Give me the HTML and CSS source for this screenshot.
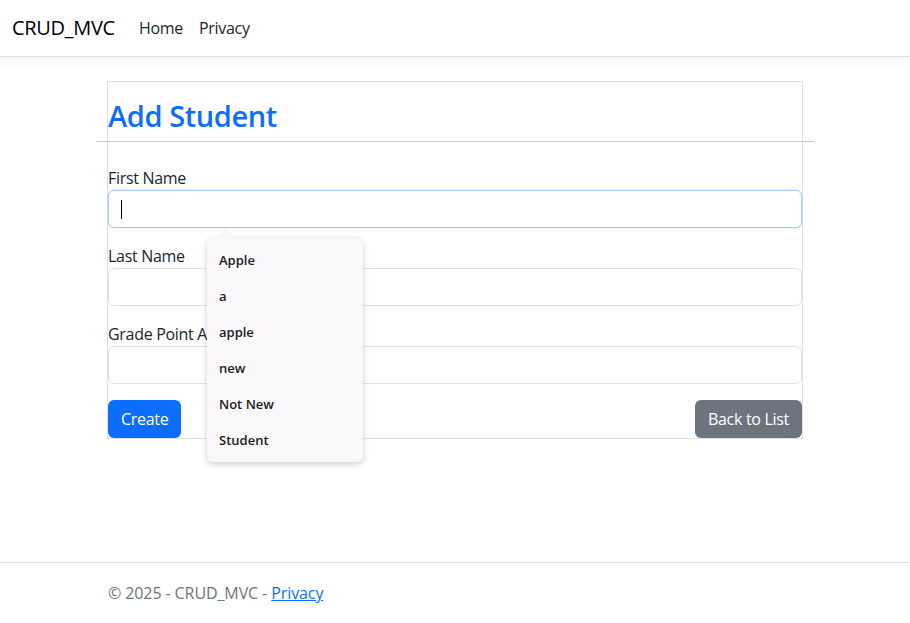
FILE: index.html
```html
<!DOCTYPE html>
<html lang="en">
<head>
    <meta charset="UTF-8">
    <meta name="viewport" content="width=device-width, initial-scale=1.0">
    <title>Add Student - CRUD_MVC</title>
    <link rel="stylesheet" href="styles.css">
</head>
<body>
    <header class="navbar">
        <a class="brand" href="#">CRUD_MVC</a>
        <nav class="nav">
            <a class="nav-link" href="#">Home</a>
            <a class="nav-link" href="#">Privacy</a>
        </nav>
    </header>

    <main class="container">
        <div class="panel">
            <h1 class="title">Add Student</h1>
            <hr class="divider">

            <form class="student-form">
                <div class="field">
                    <label class="label" for="firstName">First Name</label>
                    <div class="input-wrap">
                        <input class="input focused" id="firstName" type="text">
                        <span class="caret"></span>
                        <div class="suggest">
                            <div class="suggest-item">Apple</div>
                            <div class="suggest-item">a</div>
                            <div class="suggest-item">apple</div>
                            <div class="suggest-item">new</div>
                            <div class="suggest-item">Not New</div>
                            <div class="suggest-item">Student</div>
                        </div>
                    </div>
                </div>
                <div class="field">
                    <label class="label" for="lastName">Last Name</label>
                    <input class="input" id="lastName" type="text">
                </div>
                <div class="field">
                    <label class="label" for="gpa">Grade Point Average</label>
                    <input class="input" id="gpa" type="text">
                </div>
                <div class="actions">
                    <button class="btn btn-primary" type="submit">Create</button>
                    <a class="btn btn-secondary" href="#">Back to List</a>
                </div>
            </form>
        </div>
    </main>

    <footer class="footer">
        <div class="container">
            &copy; 2025 - CRUD_MVC - <a href="#">Privacy</a>
        </div>
    </footer>
</body>
</html>
```

FILE: styles.css
```css
* {
    box-sizing: border-box;
}

body {
    margin: 0;
    min-height: 100vh;
    display: flex;
    flex-direction: column;
    font-family: "Open Sans", "Noto Sans", sans-serif;
    font-size: 16px;
    line-height: 1.5;
    letter-spacing: -0.3px;
    color: #212529;
    background: #fff;
}

a {
    text-decoration: none;
}

/* Navbar */
.navbar {
    height: 57px;
    display: flex;
    align-items: center;
    padding: 0 12px;
    border-bottom: 1px solid #dee2e6;
    box-shadow: 0 4px 12px rgba(0,0,0,0.05);
}

.brand {
    font-size: 20px;
    color: #000;
    margin-right: 16px;
}

.nav {
    display: flex;
}

.nav-link {
    color: #212529;
    padding: 8px;
}

/* Main */
.container {
    width: 720px;
    margin: 0 auto;
    padding: 0 12px;
}

main.container {
    padding-top: 24px;
}

.panel {
    border: 1px solid #dee2e6;
}

.title {
    margin: 17px 0 7px;
    font-size: 29px;
    font-weight: 600;
    line-height: 1.2;
    letter-spacing: -0.4px;
    color: #0d6efd;
}

.divider {
    margin: 0 -12px 24px;
    border: 0;
    border-top: 1px solid #c8c8c8;
}

.field {
    margin-bottom: 16px;
}

.label {
    display: block;
}

.input-wrap {
    position: relative;
}

.input {
    display: block;
    width: 100%;
    height: 38px;
    padding: 6px 12px;
    font: inherit;
    border: 1px solid #dee2e6;
    border-radius: 6px;
    outline: none;
}

.input.focused {
    border-color: #a9c8f5;
    box-shadow: 0 0 0 1px rgba(13,110,253,0.08);
}

.caret {
    position: absolute;
    left: 13px;
    top: 10px;
    width: 1px;
    height: 19px;
    background: #000;
}

/* Autocomplete popup */
.suggest {
    position: absolute;
    left: 99px;
    top: 48px;
    width: 156px;
    padding: 4px 0;
    background: #faf8fb;
    border-radius: 6px;
    box-shadow: 0 2px 6px rgba(0,0,0,0.2);
    z-index: 10;
}

.suggest::before {
    content: "";
    position: absolute;
    left: 14px;
    top: -5px;
    width: 10px;
    height: 10px;
    background: #faf8fb;
    transform: rotate(45deg);
    box-shadow: -1px -1px 2px rgba(0,0,0,0.06);
}

.suggest-item {
    position: relative;
    height: 36px;
    line-height: 36px;
    padding: 0 12px;
    font-size: 13px;
    font-weight: 600;
    letter-spacing: 0;
    color: #1b1b1b;
}

.actions {
    display: flex;
    justify-content: space-between;
}

.btn {
    display: inline-block;
    padding: 6px 12px;
    font: inherit;
    line-height: 1.5;
    letter-spacing: -0.3px;
    color: #fff;
    border: 1px solid transparent;
    border-radius: 6px;
    cursor: pointer;
}

.btn-primary {
    background: #0d6efd;
}

.btn-secondary {
    background: #6c757d;
}

/* Footer */
.footer {
    margin-top: auto;
    height: 61px;
    line-height: 60px;
    border-top: 1px solid #dee2e6;
    color: #6c757d;
    letter-spacing: -0.1px;
}

.footer .container {
    padding-left: 13px;
}

.footer a {
    color: #0d6efd;
    text-decoration: underline;
}
```
